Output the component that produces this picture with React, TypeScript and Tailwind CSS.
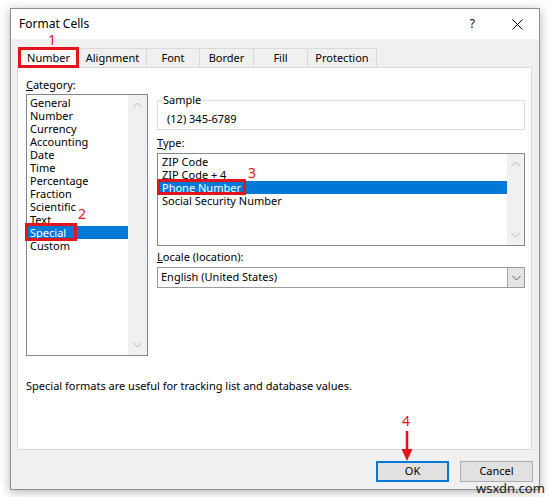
import React from "react";

const categories = [
  "General",
  "Number",
  "Currency",
  "Accounting",
  "Date",
  "Time",
  "Percentage",
  "Fraction",
  "Scientific",
  "Text",
  "Special",
  "Custom",
];

const types = ["ZIP Code", "ZIP Code + 4", "Phone Number", "Social Security Number"];

const tabs = [
  { label: "Alignment", w: "w-[68px]" },
  { label: "Font", w: "w-[53px]" },
  { label: "Border", w: "w-[54px]" },
  { label: "Fill", w: "w-[54px]" },
  { label: "Protection", w: "w-[69px]" },
];

function Chevron({ up, dark }: { up?: boolean; dark?: boolean }) {
  return (
    <svg width="9" height="6" viewBox="0 0 9 6" className="block">
      <polyline
        points={up ? "0.5,5 4.5,1 8.5,5" : "0.5,1 4.5,5 8.5,1"}
        fill="none"
        stroke={dark ? "#606060" : "#b4b4b4"}
        strokeWidth="1"
      />
    </svg>
  );
}

function ScrollTrack({ wide }: { wide?: boolean }) {
  return (
    <div
      className={`flex ${wide ? "w-[19px]" : "w-[17px]"} shrink-0 flex-col items-center justify-between bg-[#f0f0f0] py-[7px]`}
    >
      <Chevron up />
      <Chevron />
    </div>
  );
}

export default function App() {
  return (
    <div className="relative h-[497px] w-[549px] overflow-hidden bg-white pl-[10px] pt-[8px] font-['Noto_Sans',sans-serif] text-[11px] text-black">
      {/* Dialog */}
      <div className="flex h-[482px] w-[530px] flex-col border border-[#8f8f8f] bg-[#f0f0f0] shadow-[0_2px_10px_rgba(0,0,0,0.3)]">
        {/* Title bar */}
        <div className="flex h-[30px] shrink-0 items-center bg-white pl-[8px] text-[12px]">
          <span>Format Cells</span>
          <span className="ml-auto mr-[37px] text-[12px]">?</span>
          <svg width="11" height="11" viewBox="0 0 11 11" className="mr-[16px]">
            <path d="M0.5 0.5 L10.5 10.5 M10.5 0.5 L0.5 10.5" stroke="#000" strokeWidth="1" />
          </svg>
        </div>

        {/* Tabs */}
        <div className="ml-[6px] mt-[7px] flex h-[21px] items-end">
          <div className="relative z-10 -mb-px ml-[1px] flex h-[21px] w-[61px] items-center justify-center border-[3px] border-[#e5141c] bg-white pt-[1px]">
            Number
          </div>
          {tabs.map((t) => (
            <div
              key={t.label}
              className={`flex h-[19px] ${t.w} items-center justify-center border border-l-0 border-b-0 border-[#d9d9d9] bg-[#f0f0f0] pt-[1px]`}
            >
              {t.label}
            </div>
          ))}
        </div>

        {/* Panel */}
        <div className="ml-[6px] flex h-[383px] w-[515px] flex-col border border-[#d9d9d9] bg-white pl-[8px] pt-[9px]">
          <div className="flex items-start">
            {/* Category */}
            <div className="flex w-[122px] flex-col">
              <div className="h-[16px] leading-[16px]">
                <span className="underline">C</span>ategory:
              </div>
              <div className="mt-[1px] flex h-[262px] border border-[#828790]">
                <div className="flex-1 pt-[1px] leading-[13px]">
                  {categories.map((c) => (
                    <div
                      key={c}
                      className={`h-[13px] pl-[3px] ${c === "Special" ? "bg-[#0078d7] text-white" : ""}`}
                    >
                      {c}
                    </div>
                  ))}
                </div>
                <ScrollTrack wide />
              </div>
            </div>

            {/* Right column */}
            <div className="ml-[9px] flex w-[368px] flex-col pt-[16px]">
              <fieldset className="border border-[#dcdcdc] px-[9px] pb-[4px] pt-[5px]">
                <legend className="-ml-[5px] px-[1px] leading-[14px]">Sample</legend>
                <div className="leading-[13px]">(12) 345-6789</div>
              </fieldset>

              <div className="mt-[5px] h-[16px] leading-[16px]">
                <span className="underline">T</span>ype:
              </div>
              <div className="mt-[2px] flex h-[93px] border border-[#828790]">
                <div className="flex-1 pt-[1px] leading-[13px]">
                  {types.map((t) => (
                    <div
                      key={t}
                      className={`h-[13px] pl-[4px] ${t === "Phone Number" ? "bg-[#0078d7] text-white" : ""}`}
                    >
                      {t}
                    </div>
                  ))}
                </div>
                <ScrollTrack />
              </div>

              <div className="mt-[3px] h-[16px] leading-[16px]">
                <span className="underline">L</span>ocale (location):
              </div>
              <div className="mt-[2px] flex h-[21px] items-center border border-[#9a9a9a] bg-white">
                <span className="flex-1 pl-[3px]">English (United States)</span>
                <div className="flex h-full w-[17px] items-center justify-center border-l border-[#a8a8a8] bg-[#e5e5e5]">
                  <Chevron dark />
                </div>
              </div>
            </div>
          </div>

          <div className="mt-[22px] h-[16px] leading-[16px]">
            Special formats are useful for tracking list and database values.
          </div>
        </div>

        {/* Buttons */}
        <div className="mt-[11px] flex justify-end gap-[11px] pr-[6px]">
          <button className="h-[21px] w-[73px] border-2 border-[#0078d7] bg-[#e1e1e1]">OK</button>
          <button className="h-[21px] w-[73px] border border-[#adadad] bg-[#e1e1e1]">Cancel</button>
        </div>
      </div>

      {/* Annotations */}
      <span className="absolute left-[48px] top-[31px] text-[14px] leading-[18px] text-[#e5141c]">1</span>
      <span className="absolute left-[78px] top-[205px] text-[14px] leading-[18px] text-[#e5141c]">2</span>
      <span className="absolute left-[248px] top-[164px] text-[14px] leading-[18px] text-[#e5141c]">3</span>
      <span className="absolute left-[402px] top-[412px] text-[14px] leading-[18px] text-[#e5141c]">4</span>
      <div className="absolute left-[25px] top-[223px] h-[18px] w-[52px] border-[3px] border-[#e5141c]" />
      <div className="absolute left-[157px] top-[179px] h-[16px] w-[89px] border-[3px] border-[#e5141c]" />
      <svg className="absolute left-[401px] top-[431px]" width="12" height="30" viewBox="0 0 12 30">
        <line x1="6" y1="0" x2="6" y2="20" stroke="#e5141c" strokeWidth="2.5" />
        <polygon points="0.5,18 11.5,18 6,30" fill="#e5141c" />
      </svg>

      {/* Watermark */}
      <span className="absolute left-[476px] top-[480px] text-[13px] leading-[16px] text-[#222]">wsxdn.com</span>
    </div>
  );
}
